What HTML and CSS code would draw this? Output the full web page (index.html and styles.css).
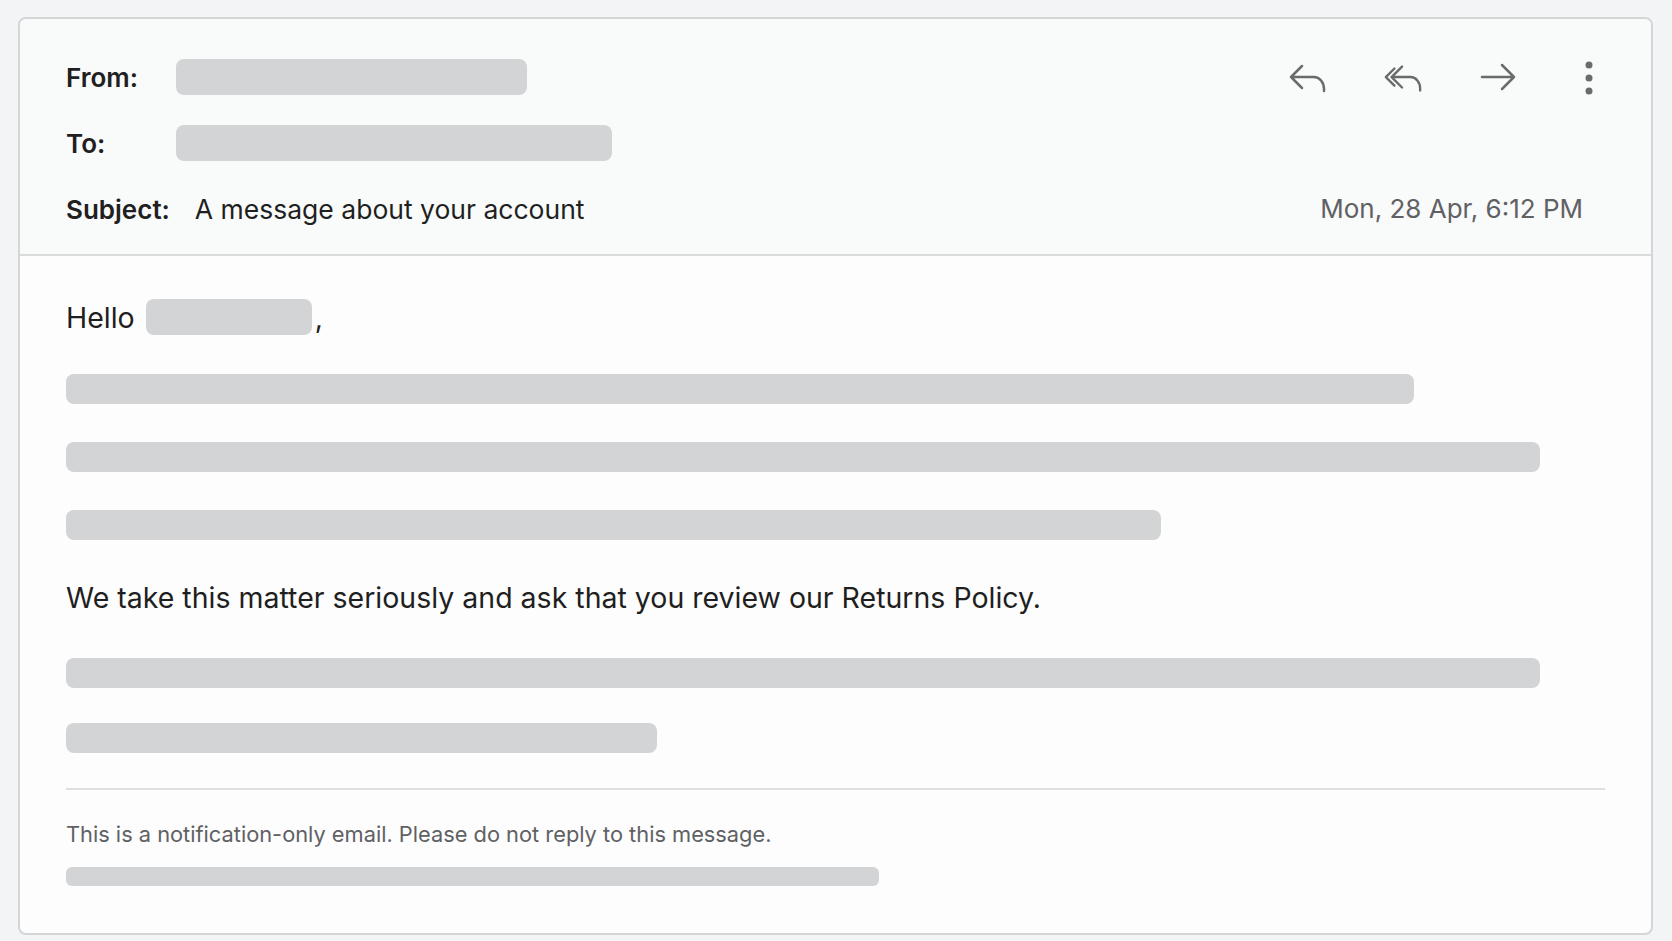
FILE: index.html
```html
<!DOCTYPE html>
<html>
<head>
  <title>A message about your account</title>
  <link rel="stylesheet" href="styles.css">
</head>
<body>
  <div class="mail">
    <div class="mail-head">
      <div class="fields">
        <div class="field">
          <span class="label">From:</span>
          <span class="blank from-blank"></span>
        </div>
        <div class="field">
          <span class="label">To:</span>
          <span class="blank to-blank"></span>
        </div>
        <div class="field">
          <span class="label">Subject:</span>
          <span class="subject">A message about your account</span>
        </div>
      </div>
      <div class="side">
        <div class="actions">
          <button class="icon-btn" title="Reply">
            <svg width="38" height="30" viewBox="0 0 38 30" fill="none" stroke="currentColor" stroke-width="2.5" stroke-linecap="round" stroke-linejoin="round">
              <path d="M13 3 L2 14 L13 25 M2 14 H25 a10 12 0 0 1 10 12 V28"/>
            </svg>
          </button>
          <button class="icon-btn" title="Reply all">
            <svg width="42" height="30" viewBox="0 0 42 30" fill="none" stroke="currentColor" stroke-width="2.5" stroke-linecap="round" stroke-linejoin="round">
              <path d="M12 5 L3 14 L12 23"/>
              <path d="M20 3 L9 14 L20 25 M9 14 H29 a10 12 0 0 1 10 12 V28"/>
            </svg>
          </button>
          <button class="icon-btn" title="Forward">
            <svg width="38" height="30" viewBox="0 0 38 30" fill="none" stroke="currentColor" stroke-width="2.5" stroke-linecap="round" stroke-linejoin="round">
              <path d="M3 14 H35 M23 2 L35 14 L23 26"/>
            </svg>
          </button>
          <button class="icon-btn more" title="More">
            <svg width="10" height="34" viewBox="0 0 10 34" fill="currentColor">
              <circle cx="5" cy="4" r="3.5"/>
              <circle cx="5" cy="17" r="3.5"/>
              <circle cx="5" cy="30" r="3.5"/>
            </svg>
          </button>
        </div>
        <div class="date">Mon, 28 Apr, 6:12 PM</div>
      </div>
    </div>

    <div class="mail-body">
      <p class="greeting">Hello <span class="blank name-blank"></span>,</p>
      <div class="line" style="width: 1348px"></div>
      <div class="line" style="width: 1474px"></div>
      <div class="line" style="width: 1095px"></div>
      <p class="text">We take this matter seriously and ask that you review our Returns Policy.</p>
      <div class="line" style="width: 1474px"></div>
      <div class="line tight" style="width: 591px"></div>

      <div class="mail-foot">
        <p class="note">This is a notification-only email. Please do not reply to this message.</p>
        <div class="line small" style="width: 813px"></div>
      </div>
    </div>
  </div>
</body>
</html>
```

FILE: styles.css
```css
body {
  margin: 0;
  background-color: #f3f4f5;
  font-family: Inter, "Noto Sans", Arial, sans-serif;
  color: #1f1f1f;
}
.mail {
  margin: 17px 19px 8px 18px;
  border: 2px solid #d4d5d7;
  border-radius: 8px;
  background-color: #fdfdfd;
  overflow: hidden;
}

/* header with sender, recipient, subject */
.mail-head {
  display: flex;
  justify-content: space-between;
  padding: 40px 46px 27px 46px;
  background-color: #f9fafa;
  border-bottom: 2px solid #dadbdd;
}
.fields {
  display: flex;
  flex-direction: column;
  gap: 30px;
}
.field {
  display: flex;
  align-items: center;
  height: 36px;
  gap: 25px;
}
.label {
  min-width: 85px;
  font-weight: 600;
  font-size: 26px;
  color: #202020;
}
.subject {
  font-size: 26.5px;
}
.blank {
  display: inline-block;
  height: 36px;
  border-radius: 8px;
  background-color: #d3d4d6;
}
.from-blank { width: 351px; }
.to-blank { width: 436px; }

.side {
  display: flex;
  flex-direction: column;
  justify-content: space-between;
  align-items: flex-end;
}
.actions {
  display: flex;
  align-items: center;
  height: 36px;
  gap: 55px;
  margin-top: 1px;
}
.icon-btn {
  display: flex;
  align-items: center;
  justify-content: center;
  width: 40px;
  height: 36px;
  padding: 0;
  border: none;
  background: none;
  color: #6a6b6d;
  cursor: pointer;
}
.icon-btn.more {
  width: 32px;
}
.date {
  height: 36px;
  line-height: 36px;
  margin-right: 22px;
  font-size: 26px;
  color: #5f6164;
}

/* message body */
.mail-body {
  padding: 43px 46px 47px 46px;
}
.greeting {
  display: flex;
  align-items: center;
  margin: 0;
  height: 36px;
  font-size: 28.5px;
}
.name-blank {
  width: 166px;
  margin-left: 11px;
  margin-right: 3px;
}
.line {
  height: 30px;
  margin-top: 38px;
  border-radius: 8px;
  background-color: #d3d4d6;
}
.line:first-of-type {
  margin-top: 39px;
}
.line.tight {
  margin-top: 35px;
}
.text {
  margin: 40px 0 0 0;
  line-height: 36px;
  font-size: 28.5px;
}
.text + .line {
  margin-top: 42px;
}

.mail-foot {
  margin-top: 35px;
  border-top: 2px solid #dedfe1;
}
.note {
  margin: 30px 0 0 0;
  line-height: 28px;
  font-size: 21.8px;
  color: #5f6164;
}
.line.small {
  height: 19px;
  margin-top: 19px;
  border-radius: 6px;
}
```
